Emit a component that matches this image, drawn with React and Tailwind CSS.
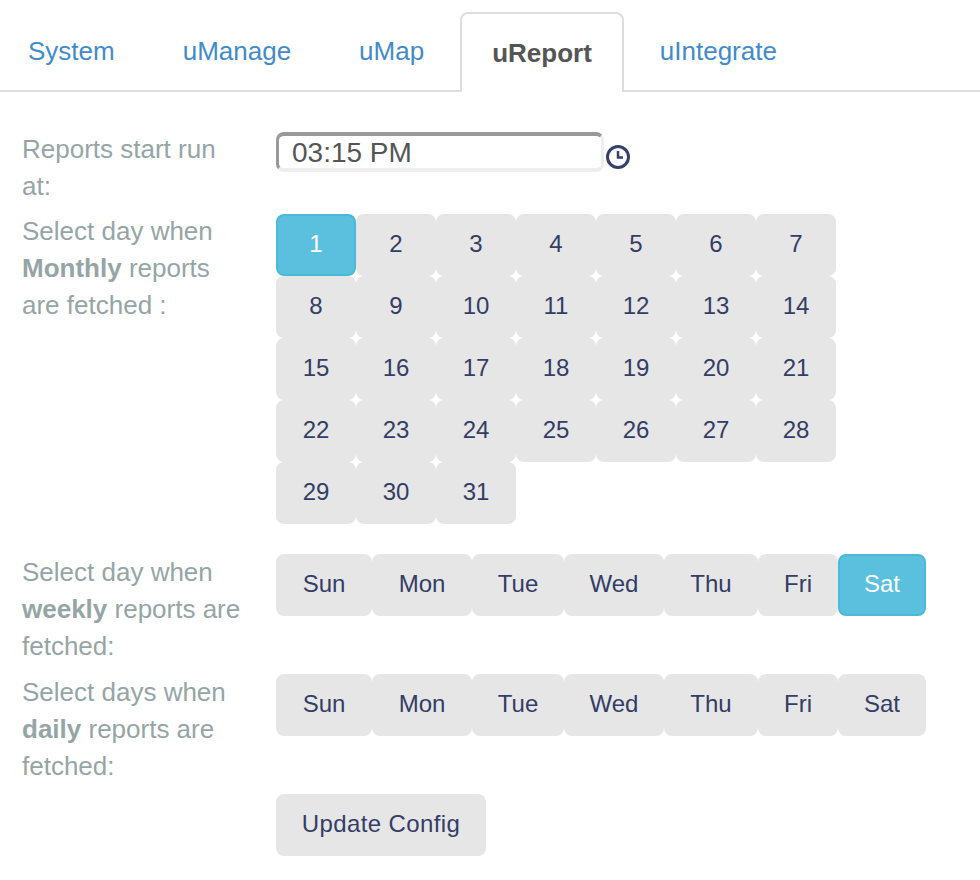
import React from "react";

const tabs = ["System", "uManage", "uMap", "uReport", "uIntegrate"];
const monthDays = Array.from({ length: 31 }, (_, i) => i + 1);
const weekDays = [
  { name: "Sun", width: "w-[96px]" },
  { name: "Mon", width: "w-[100px]" },
  { name: "Tue", width: "w-[92px]" },
  { name: "Wed", width: "w-[100px]" },
  { name: "Thu", width: "w-[94px]" },
  { name: "Fri", width: "w-[80px]" },
  { name: "Sat", width: "w-[88px]" },
];

// Small clock icon next to the time field.
const ClockIcon = () => (
  <svg width="26" height="26" viewBox="0 0 26 26" fill="none" stroke="#34406a">
    <circle cx="13" cy="13" r="10.5" strokeWidth="3" />
    <path d="M13 7v6.5h5" strokeWidth="2.5" />
  </svg>
);

const DayButton = ({ label, active, className = "" }) => (
  <button
    className={`h-[62px] rounded-lg border-2 pb-0.5 text-[24px] leading-none ${
      active
        ? "border-[#4cb9d9] bg-[#5bc0de] text-white"
        : "border-[#e6e6e6] bg-[#e6e6e6] text-[#333d66]"
    } ${className}`}
  >
    {label}
  </button>
);

const Row = ({ label, className = "", children }) => (
  <div className={`flex ${className}`}>
    <div className="w-[254px] shrink-0 pr-[29px] text-[26px] leading-[37px] text-[#95a5a6]">{label}</div>
    <div>{children}</div>
  </div>
);

const WeekRow = ({ active }) => (
  <div className="flex">
    {weekDays.map((day) => (
      <DayButton key={day.name} label={day.name} active={day.name === active} className={day.width} />
    ))}
  </div>
);

export default function App() {
  return (
    <div className="min-h-[880px] overflow-hidden bg-white font-['Liberation_Sans',Arial,sans-serif]">
      <nav className="-ml-1 flex h-[92px] items-end pt-3">
        <div className="flex h-[80px] grow border-b-2 border-[#dddddd]">
          {tabs.map((tab) =>
            tab === "uReport" ? (
              <a
                key={tab}
                className="mr-1 h-[80px] rounded-t-lg border-2 border-b-0 border-[#dddddd] bg-white px-[30px] pt-[20px] text-[26px] font-bold leading-[38px] text-[#555555]"
              >
                {tab}
              </a>
            ) : (
              <a key={tab} className="mr-1 border-2 border-transparent px-[30px] pt-[18px] text-[26px] leading-[38px] text-[#428bca]">
                {tab}
              </a>
            )
          )}
        </div>
      </nav>

      <div className="pl-[22px] pt-[39px]">
        <Row label="Reports start run at:" className="mb-2 h-[74px]">
          <div className="flex items-start pt-px">
            <input
              readOnly
              value="03:15 PM"
              className="h-[40px] w-[328px] rounded-lg border-[3px] border-b-[4px] border-t-[4px] border-b-[#eeeeee] border-l-[#999999] border-r-[#eeeeee] border-t-[#999999] pl-[13px] pt-0.5 text-[28px] leading-none text-[#555555] outline-none"
            />
            <span className="mt-3 ml-px">
              <ClockIcon />
            </span>
          </div>
        </Row>

        <Row
          label={
            <>
              Select day when <b>Monthly</b> reports are fetched :
            </>
          }
          className="mb-[30px]"
        >
          <div className="grid w-[560px] grid-cols-[repeat(7,80px)] pt-px">
            {monthDays.map((d) => (
              <DayButton key={d} label={d} active={d === 1} />
            ))}
          </div>
        </Row>

        <Row
          label={
            <>
              Select day when <b>weekly</b> reports are fetched:
            </>
          }
          className="h-[120px]"
        >
          <WeekRow active="Sat" />
        </Row>

        <Row
          label={
            <>
              Select days when <b>daily</b> reports are fetched:
            </>
          }
          className="h-[120px]"
        >
          <WeekRow />
        </Row>

        <Row label="">
          <DayButton label="Update Config" className="w-[210px] tracking-[0.4px]" />
        </Row>
      </div>
    </div>
  );
}
